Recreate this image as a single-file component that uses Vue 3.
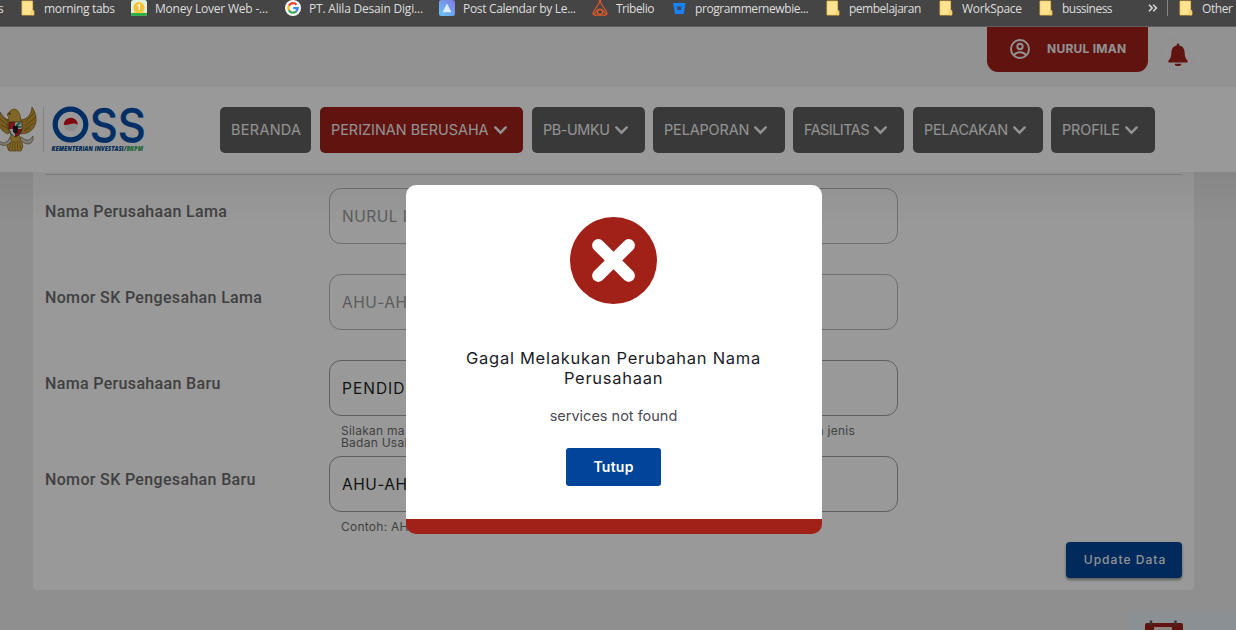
<script setup>
const bookmarks = [
  { icon: 'folder', text: 'morning tabs', ls: -0.33 },
  { icon: 'money', text: 'Money Lover Web -...', ls: -0.21 },
  { icon: 'google', text: 'PT. Alila Desain Digi...', ls: -0.2 },
  { icon: 'post', text: 'Post Calendar by Le...', ls: -0.33 },
  { icon: 'tribelio', text: 'Tribelio', ls: -0.5 },
  { icon: 'bitbucket', text: 'programmernewbie...', ls: -0.43 },
  { icon: 'folder', text: 'pembelajaran', ls: -0.48 },
  { icon: 'folder', text: 'WorkSpace', ls: -0.32 },
  { icon: 'folder', text: 'bussiness', ls: -0.52 },
]

const menus = [
  { text: 'BERANDA', w: 91, ls: 0.35, gap: 9 },
  { text: 'PERIZINAN BERUSAHA', w: 203, ls: 0.01, gap: 9, active: true, arrow: true },
  { text: 'PB-UMKU', w: 113, ls: -0.39, gap: 8, arrow: true },
  { text: 'PELAPORAN', w: 132, ls: -0.1, gap: 8, arrow: true },
  { text: 'FASILITAS', w: 111, ls: -0.5, gap: 9, arrow: true },
  { text: 'PELACAKAN', w: 130, ls: -0.25, gap: 8, arrow: true },
  { text: 'PROFILE', w: 104, ls: -0.1, gap: 0, arrow: true },
]

const fields = [
  { label: 'Nama Perusahaan Lama', value: 'NURUL IMAN', ls: 0.5, disabled: true },
  { label: 'Nomor SK Pengesahan Lama', value: 'AHU-AH', ls: 0.49, disabled: true },
  { label: 'Nama Perusahaan Baru', value: 'PENDID', ls: 1, help: ['Silakan ma', 'Badan Usaha'], tail: 'dan jenis' },
  { label: 'Nomor SK Pengesahan Baru', value: 'AHU-AH', ls: 0.49, help: ['Contoh: AH'] },
]
</script>

<template>
  <div class="screen">
    <div class="bookmarks">
      <span class="edge">s</span>
      <div v-for="b in bookmarks" :key="b.text" class="bm">
        <svg class="bm-icon" width="16" height="16" viewBox="0 0 16 16">
          <g v-if="b.icon === 'folder'">
            <path d="M2 1h10.6v9.500h1.200V15H2z" fill="#ffe391" stroke="#f3c74f" stroke-width=".8" />
            <path d="M11.600 11.200h2.200V15h-2.200z" fill="#ffe391" stroke="#e9b93b" stroke-width=".6" />
          </g>
          <g v-else-if="b.icon === 'money'">
            <rect width="16" height="16" rx="2.500" fill="#dff0df" />
            <path d="M0 13h16v.8a2.200 2.200 0 0 1-2.200 2.200H2.200A2.200 2.200 0 0 1 0 13.800z" fill="#2fae4a" />
            <circle cx="8" cy="7.600" r="5.500" fill="#fbc02d" />
            <path d="M2.500 11.500h11v1.500h-11z" fill="#ffd54f" />
            <path d="M6.800 6l1.600-1.200v5.200" fill="none" stroke="#fff" stroke-width="1.500" />
          </g>
          <g v-else-if="b.icon === 'google'">
            <circle cx="8" cy="8" r="8" fill="#fff" />
            <g fill="none" stroke-width="2.300">
              <path d="M11.500 4.700A4.700 4.700 0 0 0 3.900 5.700" stroke="#ea4335" />
              <path d="M3.900 5.700a4.700 4.700 0 0 0 0 4.600" stroke="#fbbc05" />
              <path d="M3.900 10.300a4.700 4.700 0 0 0 7.100 1.300" stroke="#34a853" />
              <path d="M11 11.600A4.500 4.500 0 0 0 12.700 8.100H8.200" stroke="#4285f4" />
            </g>
          </g>
          <g v-else-if="b.icon === 'post'">
            <defs>
              <linearGradient id="pg" x1="0" y1="1" x2="1" y2="0">
                <stop offset="0" stop-color="#67c8f5" /><stop offset="1" stop-color="#7f78e6" />
              </linearGradient>
            </defs>
            <rect width="16" height="16" rx="2.500" fill="url(#pg)" />
            <path d="M8 3.500l4.500 8.700h-9z" fill="#dcecff" />
          </g>
          <g v-else-if="b.icon === 'tribelio'" fill="none" stroke="#e2592b" stroke-width="1.200">
            <path d="M7 0l1 1.700L9 0M8 1.700L14.800 12.500q.8 2.700-1.800 2.700H3q-2.600 0-1.800-2.700z" />
            <circle cx="8" cy="11.700" r="2.700" />
            <path d="M1.800 14.300l3.800-4.300h4.800l3.800 4.300" />
          </g>
          <g v-else>
            <path d="M2 3h12.500l-1.700 11H4z" fill="#1a82f7" />
            <path d="M6 6.500h4.500l-.7 3.800H6.700z" fill="#3c4a5c" />
          </g>
        </svg>
        <span :style="{ letterSpacing: b.ls + 'px' }">{{ b.text }}</span>
      </div>
      <svg class="more" width="10" height="8" viewBox="0 0 10 8" fill="none" stroke="#dedede" stroke-width="1.500">
        <path d="M1 .8L4.200 4 1 7.200M5.200.8L8.400 4 5.200 7.200" />
      </svg>
      <span class="sep"></span>
      <div class="bm other">
        <svg class="bm-icon" width="16" height="16" viewBox="0 0 16 16">
          <path d="M2 1h10.600v9.500h1.200V15H2z" fill="#ffe391" stroke="#f3c74f" stroke-width=".8" />
          <path d="M11.600 11.200h2.200V15h-2.200z" fill="#ffe391" stroke="#e9b93b" stroke-width=".6" />
        </svg>
        <span>Other</span>
      </div>
    </div>

    <div class="page">
      <div class="topbar">
        <div class="user">
          <svg width="20" height="20" viewBox="0 0 20 20" fill="none" stroke="#f4f4f4" stroke-width="1.900">
            <circle cx="10" cy="10" r="9" />
            <circle cx="10" cy="7.500" r="2.700" />
            <path d="M3.800 16.200c1.600-2 3.700-3 6.200-3s4.600 1 6.200 3" />
          </svg>
          <span>NURUL IMAN</span>
        </div>
        <div class="bell">
          <svg width="20" height="23" viewBox="0 0 20 23" fill="#a12119">
            <path d="M8.700 1.700a1.300 1.300 0 0 1 2.600 0v.7c3.400.7 5.200 3.300 5.300 6.600.1 4.500 1 6.800 2.700 8.300.9 1 .3 2.300-.8 2.300h-17c-1.100 0-1.700-1.300-.8-2.300C2.400 15.800 3.300 13.500 3.400 9c.1-3.300 1.900-5.900 5.300-6.600z" />
            <path d="M6.600 20.700h6.800a3.400 2.300 0 0 1-6.800 0z" />
          </svg>
        </div>
      </div>

      <div class="nav">
        <svg class="logo" width="150" height="66" viewBox="0 -6 150 66">
          <g stroke="#6d531c" stroke-width=".6">
            <path fill="#c89b35" d="M11 22C3 22-1 15-1 10c-4 8-2 22 9 26l4-4zM19 22c6 0 12-3 13-13 7 10 5 22-5 26l-6 1-3-5z" />
            <path fill="#d8ac3f" d="M10 13q4-4 8 0l2 4q3 14-1 20l3 7q2 5-1 9H9q-3-4-1-9l3-7q-5-8-2-18l-2-2z" />
            <path fill="none" d="M34 15l-9 9M36 19l-11 9M34 25l-9 6M30 30l-6 3M0 14l8 10M-1 20l9 8M1 27l8 4M11 43l-2 9M13 43l-1 9M15 43v10M17 43l1 9M19 43l2 8" />
            <path fill="#d0d0c8" d="M-1 43q6 5 11-3l2 3q-5 7-13 3zM33 38q-4 8-12 1l-1 3q7 6 11 3l2-3z" />
          </g>
          <path d="M9 24h6v7H9z" fill="#d8202b" />
          <path d="M15 24h7v7h-7z" fill="#e9eee9" />
          <path d="M9 31h6v8q-5-2-6-8z" fill="#eee" />
          <path d="M15 31h7q-1 6-7 8z" fill="#c9202b" />
          <path d="M16 28l4-3M17 29h4" stroke="#159564" stroke-width="1.600" />
          <path d="M13 28h5v6l-2.500 2-2.500-2z" fill="#222" />
          <path d="M9 24h13v7q-1 6-7 8-5-2-6-8z" fill="none" stroke="#333" stroke-width=".7" />
          <path d="M10 14l-3 2 4 1z" fill="#7a541a" />
          <path d="M43.500 9v45" stroke="#d6d9e2" />
          <circle cx="70.500" cy="26.500" r="15.300" fill="none" stroke="#004da8" stroke-width="5.200" />
          <circle cx="70.800" cy="26.500" r="7" fill="#e9e9e9" />
          <path d="M63.800 26.700a7 7 0 0 1 14 0q-4-1.800-7-.6t-7 .6z" fill="#d8101d" />
          <text x="89.800" y="43.500" textLength="56" lengthAdjust="spacingAndGlyphs" class="oss">SS</text>
          <text x="51.500" y="53" textLength="91.500" lengthAdjust="spacingAndGlyphs" class="tag">KEMENTERIAN INVESTASI/<tspan class="green">BKPM</tspan></text>
        </svg>
        <div class="menus">
          <div
            v-for="m in menus"
            :key="m.text"
            class="menu"
            :class="{ active: m.active }"
            :style="{ width: m.w + 'px', marginRight: m.gap + 'px' }"
          >
            <span :style="{ letterSpacing: m.ls + 'px' }">{{ m.text }}</span>
            <svg v-if="m.arrow" width="13" height="9" viewBox="0 0 13 9" fill="none" stroke="#f4f4f4" stroke-width="2.400">
              <path d="M1.300 1.400L6.500 6.700l5.200-5.300" stroke-linecap="round" />
            </svg>
          </div>
        </div>
      </div>

      <div class="content">
        <div class="card">
          <div class="rule"></div>
          <div v-for="f in fields" :key="f.label" class="row" :class="{ tight: f.tail }">
            <div class="label">{{ f.label }}</div>
            <div class="control">
              <div class="input" :class="{ disabled: f.disabled }">
                <span :style="{ letterSpacing: f.ls + 'px' }">{{ f.value }}</span>
              </div>
              <div v-if="f.help" class="help">
                <div>
                  <div v-for="h in f.help" :key="h">{{ h }}</div>
                </div>
                <div v-if="f.tail">{{ f.tail }}</div>
              </div>
            </div>
          </div>
          <button class="update">Update Data</button>
        </div>
        <div class="shade"></div>
      </div>

      <div class="widget">
        <svg width="38" height="12" viewBox="0 0 38 12">
          <path d="M0 12V5q0-2 2-2h34q2 0 2 2v7z" fill="#a12119" />
          <path d="M9 7h18v5H9z" fill="#f1d9d8" />
          <path d="M6 .5v5M30.500 .5v5" stroke="#555" stroke-width="2.400" />
        </svg>
      </div>

      <div class="overlay">
        <div class="modal">
          <svg class="cross" width="87" height="87" viewBox="0 0 87 87">
            <circle cx="43.500" cy="43.500" r="43.500" fill="#a12119" />
            <path d="M28.300 28.300l30.400 30.400M58.700 28.300L28.300 58.700" stroke="#fff" stroke-width="12.400" stroke-linecap="round" />
          </svg>
          <div class="title">Gagal Melakukan Perubahan Nama<br />Perusahaan</div>
          <div class="message">services not found</div>
          <button class="close">Tutup</button>
        </div>
      </div>
    </div>
  </div>
</template>

<style>
html,
body {
  overflow: hidden;
}
</style>

<style scoped>
.screen {
  width: 1236px;
  height: 630px;
  overflow: hidden;
  display: flex;
  flex-direction: column;
  font-family: Inter, "Open Sans", sans-serif;
}
.screen * {
  box-sizing: border-box;
}
.bookmarks {
  height: 27px;
  flex: none;
  background: #454545;
  border-bottom: 1px solid #5e5e5e;
  display: grid;
  grid-template-columns: 20px 111px 154px 154px 153px 79px 154px 113px 100px 110px 19px 11px 60px;
  align-items: start;
  color: #dedede;
  font: 12px/17px "Open Sans", sans-serif;
  white-space: nowrap;
}
.edge {
  margin-left: -2px;
}
.bm {
  display: flex;
  gap: 8px;
}
.bm-icon {
  flex: none;
}
.other {
  letter-spacing: -0.4px;
}
.more {
  margin-top: 4px;
}
.sep {
  width: 1px;
  height: 16px;
  background: #858585;
}
.page {
  position: relative;
  flex: 1;
  display: flex;
  flex-direction: column;
  background: #eee;
  overflow: hidden;
}
.topbar {
  height: 60px;
  flex: none;
  background: #f4f4f4;
  display: flex;
  justify-content: flex-end;
  padding-right: 41px;
  gap: 13px;
}
.user {
  width: 161px;
  height: 45px;
  border-radius: 0 0 11px 11px;
  background: #a12119;
  color: #f4f4f4;
  display: flex;
  align-items: center;
  padding: 0 0 2px 23px;
  gap: 17px;
  font-size: 12px;
  font-weight: 700;
  letter-spacing: 0.24px;
  white-space: nowrap;
}
.user span {
  padding-bottom: 1px;
}
.bell {
  width: 34px;
  height: 34px;
  margin-top: 10px;
  border-radius: 50%;
  border: 1px solid #efeff1;
  display: flex;
  align-items: center;
  justify-content: center;
}
.nav {
  height: 85px;
  flex: none;
  background: #fff;
  display: flex;
}
.logo {
  margin-top: 5px;
  margin-right: 70px;
  flex: none;
}
.oss {
  font: 500 46.500px Inter, sans-serif;
  fill: #004da8;
  stroke: #004da8;
  stroke-width: 0.4px;
}
.tag {
  font: italic 800 6.200px "Open Sans", sans-serif;
  fill: #004590;
}
.green {
  fill: #35a853;
}
.menus {
  display: flex;
  padding-top: 20px;
}
.menu {
  flex: none;
  height: 46px;
  border-radius: 5px;
  background: #606060;
  color: #f4f4f4;
  display: flex;
  align-items: center;
  padding: 0 0 1px 11px;
  gap: 5px;
  font-size: 14.400px;
  white-space: nowrap;
}
.menu svg {
  margin-top: 1px;
}
.active {
  background: #a12119;
}
.content {
  position: relative;
  padding: 0 42px 0 33px;
}
.card {
  height: 418px;
  background: #fff;
  border-radius: 0 0 4px 4px;
  padding: 2px 12px 0;
  display: flex;
  flex-direction: column;
}
.rule {
  height: 1px;
  flex: none;
  background: #d6d6d6;
  margin-bottom: 13px;
}
.row {
  display: flex;
  height: 86px;
  flex: none;
}
.tight {
  height: 96px;
}
.label {
  width: 284px;
  padding-top: 14px;
  font: 500 16px/20px Roboto, sans-serif;
  letter-spacing: 0.34px;
  color: #6c6c6c;
}
.control {
  width: 569px;
}
.input {
  height: 56px;
  border: 1px solid #9f9f9f;
  border-radius: 12px;
  padding-left: 12px;
  font-size: 15.500px;
  line-height: 56px;
  color: #1f1f1f;
  white-space: nowrap;
}
.disabled {
  border-color: #b8b8b8;
  color: #9a9a9a;
}
.help {
  display: flex;
  justify-content: space-between;
  padding: 9px 43px 0 12px;
  font-size: 12px;
  line-height: 12px;
  letter-spacing: 0.25px;
  color: #6e6e6e;
}
.update {
  align-self: flex-end;
  width: 116px;
  height: 36px;
  flex: none;
  border: 0;
  padding: 0 0 1px 2px;
  border-radius: 4px;
  background: #004599;
  color: #f4f4f4;
  font: 500 12px Inter, sans-serif;
  letter-spacing: 1.030px;
  box-shadow: 0 2px 3px rgba(0, 0, 0, 0.4);
}
.shade {
  position: absolute;
  inset: 0 0 auto 0;
  height: 50px;
  background: linear-gradient(rgba(20, 20, 60, 0.06), rgba(20, 20, 60, 0));
}
.widget {
  position: absolute;
  right: 0;
  bottom: 0;
  width: 108px;
  height: 18px;
  padding: 8px 0 0 17px;
  border-radius: 8px 0 0 0;
  background: #e6f0f7;
}
.widget svg {
  display: block;
}
.overlay {
  position: absolute;
  inset: 0;
  background: rgba(0, 0, 0, 0.4);
}
.modal {
  width: 416px;
  height: 349px;
  margin: 158px 0 0 406px;
  padding: 32px 1px 0 0;
  border-radius: 10px;
  border-bottom: 15px solid #a12119;
  background: #fff;
  display: flex;
  flex-direction: column;
  align-items: center;
  text-align: center;
}
.cross {
  flex: none;
}
.title {
  margin-top: 44px;
  font-size: 16.500px;
  line-height: 20px;
  letter-spacing: 0.720px;
  color: #1c1c28;
}
.message {
  margin-top: 18px;
  font-size: 14.500px;
  line-height: 20px;
  color: #4a4a55;
}
.close {
  margin-top: 22px;
  width: 95px;
  height: 38px;
  flex: none;
  border: 0;
  padding: 0 0 2px;
  border-radius: 3px;
  background: #004599;
  color: #fff;
  font: 600 14px Inter, sans-serif;
  letter-spacing: 0.240px;
}
</style>
